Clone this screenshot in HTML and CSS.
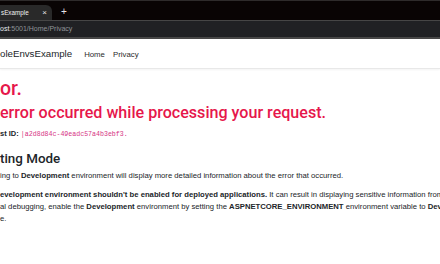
FILE: index.html
```html
<!DOCTYPE html>
<html lang="en">
<head>
  <meta charset="UTF-8">
  <meta name="viewport" content="width=device-width, initial-scale=1.0">
  <title>Error - ConsoleEnvsExample</title>
  <link rel="stylesheet" href="styles.css">
</head>
<body>
  <div class="tab-strip">
    <div class="tab">
      <span class="tab-title">sExample</span>
      <span class="tab-close">&times;</span>
    </div>
    <span class="tab-new">+</span>
  </div>

  <div class="toolbar">
    <span class="url-host">ost</span><span class="url-rest">:5001/Home/Privacy</span>
  </div>

  <header class="navbar">
    <a class="brand">oleEnvsExample</a>
    <a class="nav-link">Home</a>
    <a class="nav-link">Privacy</a>
  </header>

  <main class="content">
    <h1 class="text-danger">or.</h1>
    <h2 class="text-danger">error occurred while processing your request.</h2>

    <p class="request-id">
      <strong>st ID:</strong> <code>|a2d8d84c-49eadc57a4b3ebf3.</code>
    </p>

    <h3>ting Mode</h3>
    <p class="line">
      ing to <strong>Development</strong> environment will display more detailed information about the error that occurred.
    </p>
    <p class="warning">
      <span class="line"><strong>evelopment environment shouldn't be enabled for deployed applications.</strong> It can result in displaying sensitive information from</span>
      <span class="line">al debugging, enable the <strong>Development</strong> environment by setting the <strong>ASPNETCORE_ENVIRONMENT</strong> environment variable to <strong>Dev</strong></span>
      <span class="line">e.</span>
    </p>
  </main>
</body>
</html>
```

FILE: styles.css
```css
html, body {
  overflow: hidden;
}

body {
  margin: 0;
  font-family: "Liberation Sans", Arial, sans-serif;
  color: #212529;
  background-color: #fff;
}

/* browser chrome */
.tab-strip {
  display: flex;
  align-items: flex-end;
  height: 19px;
  border-top: 1px solid #2e2b2b;
  background-color: #090404;
}

.tab {
  display: flex;
  align-items: center;
  justify-content: space-between;
  box-sizing: border-box;
  width: 52px;
  height: 15px;
  padding: 0 5px 0 1px;
  background-color: #292929;
  border-top-right-radius: 6px;
}

.tab-title {
  font-size: 6.3px;
  color: #f1f1f1;
}

.tab-close {
  font-size: 8px;
  color: #e6e6e6;
}

.tab-new {
  margin: 0 0 2px 9px;
  font-size: 10px;
  line-height: 12px;
  color: #e6e6e6;
}

.toolbar {
  height: 16px;
  line-height: 16px;
  font-size: 7px;
  background-color: #202124;
  border-top: 1px solid #464646;
  border-bottom: 2px solid #474747;
}

.url-host {
  color: #e8eaed;
}

.url-rest {
  color: #8f9398;
}

/* site navbar */
.navbar {
  display: flex;
  align-items: baseline;
  padding: 8px 0 6px;
  line-height: 14px;
  border-bottom: 1px solid #e8e8e8;
  box-shadow: 0 1px 2px rgba(0, 0, 0, 0.05);
}

.brand {
  margin-right: 8px;
  font-size: 9.7px;
  color: #212529;
}

.nav-link {
  padding: 0 4px;
  font-size: 7.8px;
  color: #2b2b2b;
}

/* error page */
.content {
  white-space: nowrap;
}

h1, h2, h3 {
  margin: 0;
  font-family: Roboto, "Liberation Sans", sans-serif;
  font-weight: 500;
  line-height: 1.2;
}

h1 {
  margin-top: 8px;
  margin-bottom: 3px;
  font-size: 19.5px;
}

h2 {
  margin-bottom: 5px;
  font-size: 16.1px;
}

h3 {
  margin-top: 10px;
  margin-bottom: 3px;
  font-size: 13.4px;
  color: #212529;
}

.text-danger {
  color: #e6174b;
}

p {
  margin: 0;
  font-size: 7.7px;
  line-height: 12px;
}

.request-id {
  font-size: 7.5px;
}

code {
  font-family: "Liberation Mono", monospace;
  font-size: 6.6px;
  color: #d63384;
}

.warning {
  margin-top: 7px;
}

.line {
  display: block;
}
```
